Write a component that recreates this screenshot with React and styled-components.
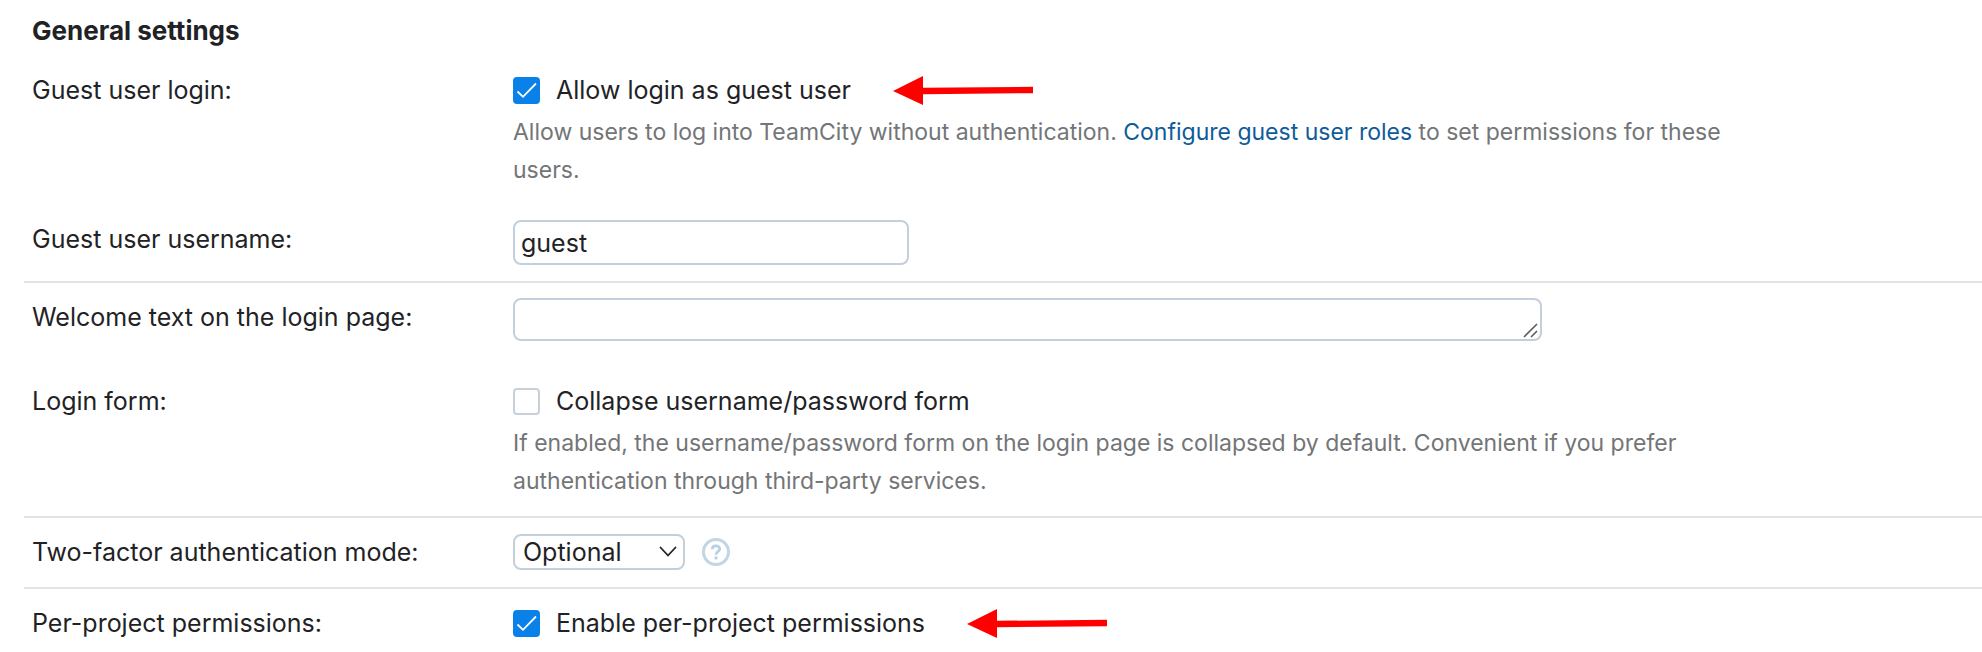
import React from "react";
import styled, { createGlobalStyle } from "styled-components";

const GlobalStyle = createGlobalStyle`
  *, *::before, *::after { box-sizing: border-box; }
  body {
    margin: 0;
    background: #fff;
    color: #1f2326;
    font: 25px/38px Inter, "Liberation Sans", sans-serif;
  }
`;

const Form = styled.form`
  padding: 12px 0 0 24px;
`;

const Heading = styled.h2`
  margin: 0 0 6px;
  padding-left: 8px;
  font-size: 26px;
  line-height: 38px;
  font-weight: 700;
`;

const Row = styled.div`
  display: grid;
  grid-template-columns: 481px minmax(0, 1fr);
  align-items: start;
  padding: 15px 0 ${(p) => p.$bottom ?? 16}px 8px;
  border-bottom: ${(p) => (p.$divided ? "2px solid #e1e4e7" : "none")};
`;

const RowLabel = styled.label`
  justify-self: start;
`;

const ControlLine = styled.div`
  display: flex;
  align-items: center;
  height: 38px;
`;

const ChoiceLabel = styled.label`
  display: flex;
  align-items: center;
  gap: 16px;
  margin-right: 42px;
`;

const BoxFrame = styled.span`
  display: grid;
  width: 27px;
  height: 27px;

  & > * { grid-area: 1 / 1; }
  & > svg { pointer-events: none; }
`;

const Box = styled.input`
  appearance: none;
  width: 27px;
  height: 27px;
  margin: 0;
  border: 2px solid #c6d1dc;
  border-radius: 4px;
  background: #fff;

  &:checked {
    border-color: #0a81e8;
    background: #0a81e8;
  }
`;

const Note = styled.p`
  max-width: 1240px;
  margin: 4px 0 0;
  color: #737577;
  font-size: 23px;
  line-height: 38px;
`;

const Link = styled.a`
  color: #0f5b99;
  text-decoration: none;
`;

const TextField = styled.input`
  display: block;
  width: 396px;
  height: 45px;
  padding: 0 6px;
  border: 2px solid #c3cfda;
  border-radius: 8px;
  color: inherit;
  font: inherit;
`;

const AreaFrame = styled.div`
  display: grid;
  max-width: 1029px;

  & > * { grid-area: 1 / 1; }
  & > svg {
    place-self: end;
    margin: 2px;
    pointer-events: none;
  }
`;

const Area = styled.textarea`
  display: block;
  width: 100%;
  height: 43px;
  padding: 0 6px;
  border: 2px solid #c3cfda;
  border-radius: 8px;
  color: inherit;
  font: inherit;
  resize: none;
  overflow: hidden;
`;

const SelectFrame = styled.div`
  display: grid;
  align-items: center;
  width: 172px;
  margin-right: 17px;

  & > * { grid-area: 1 / 1; }
  & > svg {
    justify-self: end;
    margin-right: 8px;
    pointer-events: none;
  }
`;

const Select = styled.select`
  appearance: none;
  width: 100%;
  height: 36px;
  padding: 0 32px 0 8px;
  border: 2px solid #c3cfda;
  border-radius: 8px;
  background: #fff;
  color: inherit;
  font: inherit;
  line-height: 32px;
`;

const HelpButton = styled.button`
  display: grid;
  place-items: center;
  width: 28px;
  height: 28px;
  padding: 0;
  border: 3px solid #c1d5e5;
  border-radius: 50%;
  background: #fff;
  color: #b9d0e2;
`;

const Tick = () => (
  <svg width="27" height="27" viewBox="0 0 27 27" fill="none" aria-hidden="true">
    <path d="M4.5 14.5L10 19.8L23 6.5" stroke="#fff" strokeWidth="1.8" />
  </svg>
);

const Arrow = () => (
  <svg width="140" height="30" viewBox="0 0 140 30" fill="#fe0000" aria-hidden="true">
    <path d="M0 16L30 1V12.8L140 11.8V18.2L30 19.2V30Z" />
  </svg>
);

const Grip = () => (
  <svg width="17" height="17" viewBox="0 0 17 17" fill="none" aria-hidden="true">
    <path d="M1 15L14 2M8 15L14 9" stroke="#5c5c5c" strokeWidth="1.6" />
  </svg>
);

const Chevron = () => (
  <svg width="18" height="12" viewBox="0 0 18 12" fill="none" aria-hidden="true">
    <path d="M1.5 1.5L9 9.5L16.5 1.5" stroke="#1f2326" strokeWidth="1.8" strokeLinecap="round" strokeLinejoin="round" />
  </svg>
);

const QuestionMark = () => (
  <svg width="12" height="16" viewBox="0 0 12 16" fill="none" aria-hidden="true">
    <path d="M2.2 5.2C2.2 0.8 9.8 0.8 9.8 5C9.8 7.4 6 7.6 6 10.8" stroke="currentColor" strokeWidth="2.8" />
    <rect x="4.5" y="12.4" width="3" height="3" fill="currentColor" />
  </svg>
);

function Choice({ id, checked, children }) {
  return (
    <ChoiceLabel>
      <BoxFrame>
        <Box type="checkbox" id={id} defaultChecked={checked} />
        {checked && <Tick />}
      </BoxFrame>
      {children}
    </ChoiceLabel>
  );
}

export default function App() {
  return (
    <>
      <GlobalStyle />
      <Form>
        <Heading>General settings</Heading>

        <Row>
          <RowLabel htmlFor="guest-login">Guest user login:</RowLabel>
          <div>
            <ControlLine>
              <Choice id="guest-login" checked>Allow login as guest user</Choice>
              <Arrow />
            </ControlLine>
            <Note>
              Allow users to log into TeamCity without authentication.{" "}
              <Link href="#guest-roles">Configure guest user roles</Link> to set permissions for these users.
            </Note>
          </div>
        </Row>

        <Row $divided>
          <RowLabel htmlFor="guest-name">Guest user username:</RowLabel>
          <TextField id="guest-name" type="text" defaultValue="guest" />
        </Row>

        <Row $bottom={26}>
          <RowLabel htmlFor="welcome">Welcome text on the login page:</RowLabel>
          <AreaFrame>
            <Area id="welcome" rows={1} />
            <Grip />
          </AreaFrame>
        </Row>

        <Row $divided>
          <RowLabel htmlFor="collapse-form">Login form:</RowLabel>
          <div>
            <ControlLine>
              <Choice id="collapse-form">Collapse username/password form</Choice>
            </ControlLine>
            <Note>
              If enabled, the username/password form on the login page is collapsed by default. Convenient if you
              prefer authentication through third-party services.
            </Note>
          </div>
        </Row>

        <Row $divided>
          <RowLabel htmlFor="two-factor">Two-factor authentication mode:</RowLabel>
          <ControlLine>
            <SelectFrame>
              <Select id="two-factor" defaultValue="Optional">
                <option>Optional</option>
              </Select>
              <Chevron />
            </SelectFrame>
            <HelpButton type="button" aria-label="Help">
              <QuestionMark />
            </HelpButton>
          </ControlLine>
        </Row>

        <Row>
          <RowLabel htmlFor="per-project">Per-project permissions:</RowLabel>
          <ControlLine>
            <Choice id="per-project" checked>Enable per-project permissions</Choice>
            <Arrow />
          </ControlLine>
        </Row>
      </Form>
    </>
  );
}
